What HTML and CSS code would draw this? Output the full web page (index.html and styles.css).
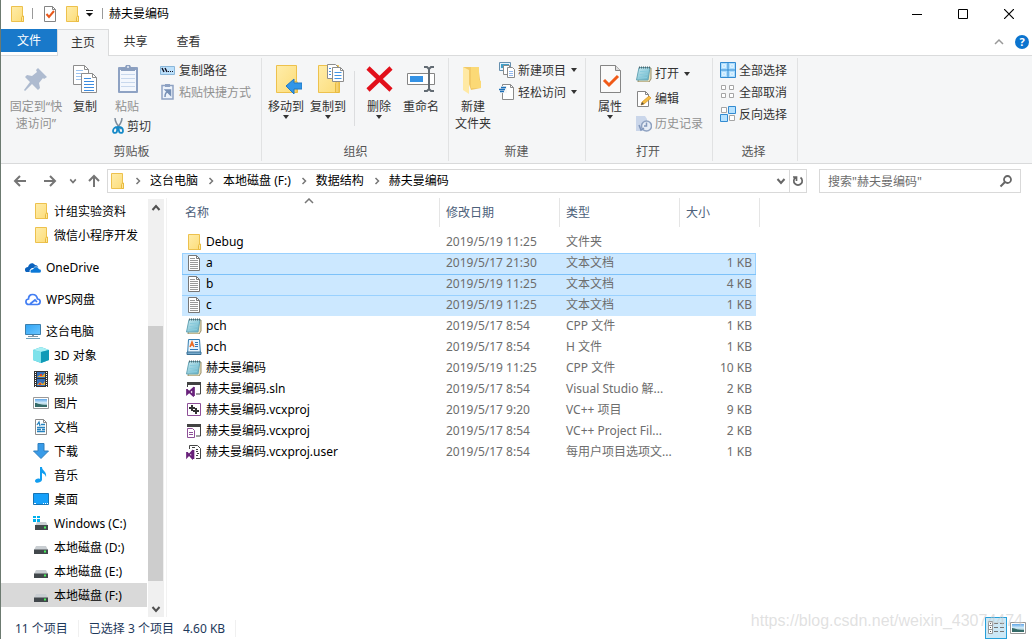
FILE: index.html
```html
<!DOCTYPE html>
<html lang="zh-CN">
<head>
<meta charset="utf-8">
<title>赫夫曼编码</title>
<link rel="stylesheet" href="styles.css">
</head>
<body>
<svg class="defs" aria-hidden="true">
  <defs>
    <linearGradient id="gf" x1="0" y1="0" x2="1" y2="1"><stop offset="0" stop-color="#ffedaa"/><stop offset="1" stop-color="#fcdc78"/></linearGradient>
    <linearGradient id="gb" x1="0" y1="0" x2="1" y2="1"><stop offset="0" stop-color="#2fa4f5"/><stop offset="1" stop-color="#6cc6ff"/></linearGradient>
    <linearGradient id="gn" x1="0" y1="0" x2="1" y2="1"><stop offset="0" stop-color="#c6eaf2"/><stop offset="1" stop-color="#62b2c6"/></linearGradient>
    <linearGradient id="gs" x1="0" y1="0" x2="0" y2="1"><stop offset="0" stop-color="#5fa6e8"/><stop offset=".5" stop-color="#d9f0fb"/><stop offset="1" stop-color="#376f73"/></linearGradient>
  </defs>
  <symbol id="folder" viewBox="-1 0 16 16"><path d="M1.500.5h11v10h1v5h-12z" fill="url(#gf)" stroke="#edc14d"/><path d="M11.500 15.500v-4l1-1.500h1v5.500z" fill="#ffe69a" stroke="#e8bb3f"/></symbol>
  <symbol id="doccheck" viewBox="0 0 16 16"><path d="M2.500.5h8l3 3v12h-11z" fill="#fff" stroke="#848484"/><path d="M10.500.5v3h3" fill="none" stroke="#848484"/><path d="M4.500 8l2.500 3 5-6" fill="none" stroke="#e8591c" stroke-width="2"/></symbol>
  <symbol id="down" viewBox="0 0 6 4"><path d="M0 0h6L3 4z" fill="currentColor"/></symbol>
  <symbol id="chev-r" viewBox="0 0 8 8"><path d="M2.500 1l3 3-3 3" fill="none" stroke="currentColor" stroke-width="1.500"/></symbol>
  <symbol id="chev-d" viewBox="0 0 10 10"><path d="M1.500 3l3.500 4 3.500-4" fill="none" stroke="currentColor" stroke-width="2"/></symbol>
  <symbol id="chev-u" viewBox="0 0 10 10"><path d="M1 7l4-4 4 4" fill="none" stroke="currentColor" stroke-width="1.500"/></symbol>
  <symbol id="arrow-l" viewBox="0 0 14 14"><path d="M13 7H2M7 2L2 7l5 5" fill="none" stroke="currentColor" stroke-width="2"/></symbol>
  <symbol id="arrow-r" viewBox="0 0 14 14"><path d="M1 7h11M7 2l5 5-5 5" fill="none" stroke="currentColor" stroke-width="2"/></symbol>
  <symbol id="arrow-u" viewBox="0 0 14 14"><path d="M7 13V2M2 7l5-5 5 5" fill="none" stroke="currentColor" stroke-width="2"/></symbol>
  <symbol id="pin" viewBox="0 0 32 32"><path d="M18 4l9 9-3 2-1-1-4 5 1 5-2 2-6-6-7 7-1-1 6-8-5-5 2-2 5 1 5-4-1-2z" fill="#aebbd0"/></symbol>
  <symbol id="copy" viewBox="0 0 32 32"><g fill="#fff" stroke="#8d8d8d"><path d="M4.500 1.500h11l4 4v15h-15z"/><path d="M15.500 1.500v4h4" fill="none"/></g><path d="M7 6.500h7M7 9.500h9M7 12.500h9M7 15.500h9" stroke="#9cc3f0"/><g fill="#fff" stroke="#8d8d8d"><path d="M12.500 9.500h11l4 4v15h-15z"/><path d="M23.500 9.500v4h4" fill="none"/></g><path d="M15 14.500h7M15 17.500h10M15 20.500h10M15 23.500h10M15 26.500h10" stroke="#3c8ce0"/></symbol>
  <symbol id="paste" viewBox="0 0 32 32"><rect x="7" y="3" width="20" height="26" rx="1" fill="#8ea2c3"/><path d="M9 6h16v21H9z" fill="#f3f7fd"/><path d="M10 10.500h14M10 14.500h14M10 18.500h14M10 22.500h14" stroke="#c8d8ed"/><path d="M10 7V4l4-1 1-2h4l1 2 4 1v3z" fill="#8b9fbf"/><circle cx="17" cy="3" r="1" fill="#e8eef8"/></symbol>
  <symbol id="cut" viewBox="0 0 12 16"><path d="M3 0c0 4 2 7 6 11M10 0c0 4-2 7-6 11" fill="none" stroke="#7f8d9c" stroke-width="1.500"/><path d="M5.500 9c-2 0-4.500 1-4.500 4 0 3 4 2 4 0zM6.500 9c2 0 4.500 1 4.500 4 0 3-4 2-4 0z" fill="none" stroke="#168ac8" stroke-width="1.800"/></symbol>
  <symbol id="path" viewBox="0 0 16 16"><path d="M.5 4.500h14v8H.5z" fill="#bce0fb" stroke="#8ab7da"/><path d="M2 6l2 4M5 6l2 4" stroke="#112" stroke-width="1.400"/><path d="M8 9.500h1M10 9.500h1M12 9.500h1" stroke="#112"/></symbol>
  <symbol id="pasteshort" viewBox="0 0 16 16"><path d="M2 1.500h11v13.500H2z" fill="#edf3fb" stroke="#8ea2c3" stroke-width="1.500"/><path d="M5 0h5v3H5z" fill="#8ea2c3"/><path d="M5 13c0-4 1-5 3-5M5.500 6h5v5z" fill="none" stroke="#7790b6" stroke-width="1.500"/><path d="M5.500 6h5v5z" fill="#7790b6"/></symbol>
  <symbol id="bigfolder" viewBox="0 0 32 32"><path d="M6.500 1.500h20v17h1v10h-21z" fill="url(#gf)" stroke="#edc14d"/><path d="M23.500 28.500v-9l1-2h2.500v11z" fill="#f5d170" stroke="#e8bb3f"/></symbol>
  <symbol id="moveto" viewBox="0 0 32 32"><use href="#bigfolder"/><path d="M16 22l8-7v4h8v6h-8v5z" fill="#3296e8" stroke="#2078c4"/></symbol>
  <symbol id="copyto" viewBox="0 0 32 32"><use href="#bigfolder"/><g fill="#fff" stroke="#8d8d8d"><path d="M15.500.5h8l3 3v11h-11z"/><path d="M20.500 3.500h8l3 3v11h-11z"/><path d="M28.500 3.500v3h3" fill="none"/></g><path d="M22.500 8.500h7M22.500 11.500h7M22.500 14.500h7M17 4.500h2M17 7.500h2M17 10.500h2" stroke="#4295e4"/></symbol>
  <symbol id="delete" viewBox="0 0 32 32"><path d="M5 4l23 22M28 4L5 26" stroke="#e2101b" stroke-width="4.500"/></symbol>
  <symbol id="rename" viewBox="0 0 32 32"><path d="M2.500 9.500h27v11h-27z" fill="#fff" stroke="#858585"/><path d="M5 12h13v6H5z" fill="#3492e5"/><path d="M19 3h3l2 2 2-2h3M24 4v22M19 27h3l2-2 2 2h3" fill="none" stroke="#626b73" stroke-width="2"/></symbol>
  <symbol id="newfolder" viewBox="0 0 32 32"><path d="M6 3h16v5l2 16-10 2z" fill="#f2ca68"/><path d="M14 3h8v13l2 1v7H14z" fill="#fbd976"/><path d="M6 3l6 3v24l-6-4z" fill="#ffe9a4"/></symbol>
  <symbol id="newitem" viewBox="0 0 16 16"><path d="M.5.5h11v8H.5z" fill="#e5f4ff" stroke="#668fae"/><path d="M2 2h8v4H2z" fill="#409fc8"/><path d="M4.500 3.500h6v9h-6z" fill="#fff" stroke="#8a8a8a"/><path d="M8.500 5.500h5l2 2v8h-7z" fill="#fff" stroke="#8a8a8a"/><path d="M10 9.500h4M10 11.500h4M10 13.500h4" stroke="#91b8ef"/></symbol>
  <symbol id="easy" viewBox="0 0 16 16"><path d="M3.500.5h8l3 3v12h-11z" fill="#fff" stroke="#8a8a8a"/><path d="M11.500.5v3h3" fill="none" stroke="#8a8a8a"/><path d="M1 2h7v7H0z" fill="#f5f6f7"/><path d="M2 3.500h5M0 5.500h6M1 7.500h4" stroke="#1e70b8" stroke-width="1.400"/></symbol>
  <symbol id="props" viewBox="0 0 32 32"><path d="M6.500 1.500h15l5 5v22h-20z" fill="#fafafa" stroke="#858585"/><path d="M21.500 1.500v5h5" fill="#ddd" stroke="#858585"/><path d="M10 16l5 5 9-9" fill="none" stroke="#f05a18" stroke-width="3"/></symbol>
  <symbol id="notepad" viewBox="0 0 16 16"><path d="M4 2h11v11l-2 3H2z" fill="#ece2bc" stroke="#998e69"/><path d="M3 1.500h11l-2 12.500H.5z" fill="url(#gn)" stroke="#67a5b5"/><path d="M3 1.500h11" stroke="#4c6870" stroke-width="2" stroke-dasharray="1 1"/><path d="M4 5.500h8M3.500 8.500h8M3 11.500h8" stroke="#8acbdc"/></symbol>
  <symbol id="edit" viewBox="0 0 16 16"><path d="M1.500.5h8l3 3v12h-11z" fill="#fff" stroke="#858585"/><path d="M9.500.5v3h3" fill="none" stroke="#858585"/><path d="M5 14l1-3 7-6 2 2-7 6z" fill="#f4bd43" stroke="#d59120" stroke-width=".7"/><path d="M5 14l1-3 2 2z" fill="#4c4c4c"/></symbol>
  <symbol id="history" viewBox="0 0 16 16"><path d="M0 0h9l2 3v12H0z" fill="#cad6ea"/><circle cx="10.500" cy="10" r="5" fill="#e7edf6" stroke="#8fa2c1" stroke-width="1.500"/><path d="M10.500 6.500V10H8M3 9l2 5 3-2" fill="none" stroke="#8197bb" stroke-width="1.500"/></symbol>
  <symbol id="selall" viewBox="0 0 16 16"><path d="M.5.5h15v15H.5zM8 0v16M0 8h16" fill="#acdcfd" stroke="#338bd1"/><path d="M2.500 2.500h3v3h-3zM10.500 2.500h3v3h-3zM2.500 10.500h3v3h-3zM10.500 10.500h3v3h-3z" fill="#c3e7ff" stroke="#dcf2ff"/></symbol>
  <symbol id="selnone" viewBox="0 0 16 16"><path d="M1.500 1.500h4v4h-4zM9.500 1.500h4v4h-4zM1.500 9.500h4v4h-4zM9.500 9.500h4v4h-4z" fill="#fff" stroke="#a5a5a5"/></symbol>
  <symbol id="selinv" viewBox="0 0 16 16"><path d="M1.500 1.500h5v5h-5zM9.500 9.500h5v5h-5z" fill="#fff" stroke="#a5a5a5"/><path d="M8.500.5h7v7h-7zM.5 8.500h7v7h-7z" fill="#b7e2ff" stroke="#338bd1"/></symbol>
  <symbol id="cloud" viewBox="0 0 16 16"><path d="M1 13c-2-2-1-5 2-5 1-4 5-5 7-2 2 0 3 1 3 3L7 9c-2 1-3 3-2 4z" fill="#0b62bd"/><path d="M6 14c-2-2 0-4 2-4 1-3 5-3 6 0 3 0 3 4 0 4z" fill="#0a78d7" stroke="#fff" stroke-width=".6"/></symbol>
  <symbol id="wps" viewBox="0 0 16 16"><path d="M4 13.500c-4 0-4-5-.5-5.500 0-6 8-6 9 0 4 .5 3 5.500 0 5.500zM5 13l5-4 2 2" fill="none" stroke="#427ef3" stroke-width="1.700"/></symbol>
  <symbol id="pc" viewBox="0 0 16 16"><path d="M.5 1.500h15v10H.5z" fill="url(#gb)" stroke="#3c7fad"/><path d="M7 12h2v1h4v1H3v-1h4z" fill="#8195a3"/><path d="M1 15.500h14" stroke="#6fa2bd"/></symbol>
  <symbol id="cube" viewBox="0 0 16 16"><path d="M0 3l8-3 8 3v10l-8 3-8-3z" fill="#31b9d1"/><path d="M0 3l8 2v11l-8-3z" fill="#7ee2eb"/><path d="M0 3l8-3 8 3-8 2z" fill="#a9f0f4"/><path d="M8 5l8-2v10l-8 3z" fill="#119ab7"/></symbol>
  <symbol id="film" viewBox="0 0 16 16"><path d="M1 0h14v16H1z" fill="#333"/><path d="M2.500 1v15M13.500 1v15" stroke="#fff" stroke-dasharray="1 1"/><path d="M4 1h8v6H4zM4 8h8v7H4z" fill="#356fba"/><path d="M4 6l3-2 2 1 3-3v4H4zM4 14l3-3 3 2 2-3v4H4z" fill="#e9ac34"/><path d="M7 3h2v2H7zM6 12h2v2H6z" fill="#da4430"/></symbol>
  <symbol id="picture" viewBox="0 0 16 16"><path d="M.5 2.500h15v11H.5z" fill="#fff" stroke="#999"/><path d="M2 4h12v8H2z" fill="url(#gs)"/><path d="M2 8c3 0 4 2 12 2v2H2z" fill="#356b69"/></symbol>
  <symbol id="docs" viewBox="0 0 16 16"><path d="M2.500.5h8l3 3v12h-11z" fill="#fff" stroke="#8b8b8b"/><path d="M10.500.5v3h3" fill="none" stroke="#8b8b8b"/><path d="M4 6l2-3 1 4M8 5.500h4M4 8.500h8M4 10.500h4M9 10.500h3M4 12.500h8" fill="none" stroke="#2682be" stroke-width="1.300"/></symbol>
  <symbol id="download" viewBox="0 0 16 16"><path d="M5 .5h6V8h4.500L8 15.500.5 8H5z" fill="#389be8" stroke="#2f7fbd"/></symbol>
  <symbol id="music" viewBox="0 0 16 16"><path d="M7 0h2c0 4 5 4 4 10-1-3-2-3-4-4v7c-1 3-7 4-7 1 0-2 3-3 5-2z" fill="#129ef0"/></symbol>
  <symbol id="desktop" viewBox="0 0 16 16"><path d="M.5 2.500h15v11H.5z" fill="#16a0fa" stroke="#1774b4"/><path d="M1 12.500h2M10 12.500h1M12 12.500h1M14 12.500h1" stroke="#fff"/></symbol>
  <symbol id="disk" viewBox="0 0 16 16"><path d="M3 7h10l2 4H1z" fill="#c9ced2"/><path d="M1 10.500h14V15H1z" fill="#42484c"/><path d="M11 12.500h2" stroke="#47f25b" stroke-width="2"/></symbol>
  <symbol id="windisk" viewBox="0 0 16 16"><path d="M4 7h9l2 4H2z" fill="#c9ced2"/><path d="M0 1h3v2H0zM4 1h3v2H4zM0 4h3v3H0zM4 4h3v3H4z" fill="#00b0ed"/><path d="M2 10h13v5H2z" fill="#42484c"/><path d="M11 12.500h2" stroke="#47f25b" stroke-width="2"/></symbol>
  <symbol id="text" viewBox="0 0 16 16"><path d="M2.500.5h8l3 3v12h-11z" fill="#fff" stroke="#777"/><path d="M10.500.5v3h3" fill="none" stroke="#777"/><path d="M4 3.500h5M4 5.500h8M4 7.500h8M4 9.500h8M4 11.500h8M4 13.500h8" stroke="#999"/></symbol>
  <symbol id="header" viewBox="0 0 16 16"><path d="M2.500.5h11l1 15h-13z" fill="#e7f5ff" stroke="#357daf"/><path d="M1 13h14v2.500H1z" fill="#76aacd" stroke="#386f94"/><path d="M4 8l2-5 2 5M5 6h2" fill="none" stroke="#ee6b22" stroke-width="1.500"/><path d="M9 3.500h3M9 5.500h3M9 7.500h3M4 10.500h8" stroke="#3578b5"/></symbol>
  <symbol id="sln" viewBox="0 0 16 16"><path d="M1 1h14v3H1z" fill="#424242"/><path d="M1.500 3v3M14.500 3v10H10" fill="none" stroke="#424242"/><path d="M1 8v5l6-5.500v7L1 9M8 6v9" fill="none" stroke="#68217a" stroke-width="1.700"/></symbol>
  <symbol id="vcx" viewBox="0 0 16 16"><path d="M1.500 1.500h13v12h-13z" fill="#fff" stroke="#8e4f98"/><path d="M6 3v6M3 6h6M10 6v6M7 9h6" stroke="#333" stroke-width="2"/></symbol>
  <symbol id="filter" viewBox="0 0 16 16"><path d="M1 1h14v3H1z" fill="#424242"/><path d="M14.500 3v10H10" fill="none" stroke="#424242"/><path d="M1.500 5.500h5l2 2v7h-7z" fill="#fff" stroke="#8e4f98"/><path d="M3 9.500h4M3 11.500h4" stroke="#8e4f98"/></symbol>
  <symbol id="user" viewBox="0 0 16 16"><path d="M3.500 5V1.500h8l3 3v10H10" fill="#fff" stroke="#444"/><path d="M6 3.500h3M10 5.500h2M10 7.500h2M11 9.500h2M10 11.500h2" stroke="#444"/><path d="M1 8v5l5-5.500v6.500L1 8.500M7.500 6v9" fill="none" stroke="#68217a" stroke-width="1.700"/></symbol>
</svg>

<header class="titlebar">
  <svg class="i16"><use href="#folder"/></svg><span class="tick"></span>
  <button class="quick" aria-label="属性"><svg class="i16"><use href="#doccheck"/></svg></button>
  <button class="quick" aria-label="新建文件夹"><svg class="i16"><use href="#folder"/></svg></button>
  <button class="quick more" aria-label="自定义快速访问工具栏"><svg viewBox="0 0 7 7"><path d="M0 .5h7" stroke="#222"/><path d="M0 3h7L3.500 6.500z" fill="#111"/></svg></button><span class="tick"></span>
  <h1>赫夫曼编码</h1>
  <div class="controls">
    <button aria-label="最小化"><svg viewBox="0 0 10 10"><path d="M0 5.500h10" stroke="#000"/></svg></button>
    <button aria-label="最大化"><svg viewBox="0 0 10 10"><path d="M.5.5h9v9h-9z" fill="none" stroke="#000"/></svg></button>
    <button aria-label="关闭"><svg viewBox="0 0 10 10"><path d="M0 0l10 10M10 0L0 10" stroke="#000" stroke-width="1.200"/></svg></button>
  </div>
</header>

<nav class="tabs">
  <button class="file">文件</button><button class="active">主页</button><button>共享</button><button>查看</button>
  <div class="help"><button aria-label="折叠功能区"><svg class="i10"><use href="#chev-u"/></svg></button><button class="q" aria-label="帮助">?</button></div>
</nav>

<section class="ribbon">
  <div class="group clipboard">
    <div class="tools">
      <button class="big pinbtn" disabled><svg><use href="#pin"/></svg><span>固定到“快<br>速访问”</span></button>
      <button class="big copybtn"><svg><use href="#copy"/></svg><span>复制</span></button>
      <div class="pastecol"><button class="big" disabled><svg><use href="#paste"/></svg><span>粘贴</span></button><button class="small"><svg class="scissors"><use href="#cut"/></svg>剪切</button></div>
      <div class="stack"><button class="small"><svg class="i16"><use href="#path"/></svg>复制路径</button><button class="small" disabled><svg class="i16"><use href="#pasteshort"/></svg>粘贴快捷方式</button></div>
    </div>
    <h2>剪贴板</h2>
  </div>
  <div class="group organize">
    <div class="tools">
      <button class="big"><svg><use href="#moveto"/></svg><span>移动到</span><svg class="caret"><use href="#down"/></svg></button>
      <button class="big"><svg><use href="#copyto"/></svg><span>复制到</span><svg class="caret"><use href="#down"/></svg></button>
      <span class="rule"></span>
      <button class="big"><svg><use href="#delete"/></svg><span>删除</span><svg class="caret"><use href="#down"/></svg></button>
      <button class="big"><svg><use href="#rename"/></svg><span>重命名</span></button>
    </div>
    <h2>组织</h2>
  </div>
  <div class="group new">
    <div class="tools">
      <button class="big"><svg><use href="#newfolder"/></svg><span>新建<br>文件夹</span></button>
      <div class="stack"><button class="small"><svg class="i16"><use href="#newitem"/></svg>新建项目<svg class="caret"><use href="#down"/></svg></button><button class="small"><svg class="i16"><use href="#easy"/></svg>轻松访问<svg class="caret"><use href="#down"/></svg></button></div>
    </div>
    <h2>新建</h2>
  </div>
  <div class="group open">
    <div class="tools">
      <button class="big"><svg><use href="#props"/></svg><span>属性</span><svg class="caret"><use href="#down"/></svg></button>
      <div class="stack loose"><button class="small"><svg class="i16"><use href="#notepad"/></svg>打开<svg class="caret"><use href="#down"/></svg></button><button class="small"><svg class="i16"><use href="#edit"/></svg>编辑</button><button class="small" disabled><svg class="i16"><use href="#history"/></svg>历史记录</button></div>
    </div>
    <h2>打开</h2>
  </div>
  <div class="group select">
    <div class="tools"><div class="stack"><button class="small"><svg class="i16"><use href="#selall"/></svg>全部选择</button><button class="small"><svg class="i16"><use href="#selnone"/></svg>全部取消</button><button class="small"><svg class="i16"><use href="#selinv"/></svg>反向选择</button></div></div>
    <h2>选择</h2>
  </div>
</section>

<section class="navbar">
  <button class="nav wide" aria-label="后退"><svg class="i14"><use href="#arrow-l"/></svg></button>
  <button class="nav wide" aria-label="前进"><svg class="i14"><use href="#arrow-r"/></svg></button>
  <button class="nav recent" aria-label="最近位置"><svg class="i8"><use href="#chev-d"/></svg></button>
  <button class="nav up" aria-label="上移"><svg class="i14"><use href="#arrow-u"/></svg></button>
  <div class="address">
    <svg class="i16"><use href="#folder"/></svg><svg class="sep"><use href="#chev-r"/></svg>
    <a href="#pc-root">这台电脑</a><svg class="sep"><use href="#chev-r"/></svg>
    <a href="#disk-f">本地磁盘 (F:)</a><svg class="sep"><use href="#chev-r"/></svg>
    <a href="#data">数据结构</a><svg class="sep"><use href="#chev-r"/></svg>
    <a href="#here">赫夫曼编码</a>
    <button class="history" aria-label="以前的位置"><svg class="i10"><use href="#chev-d"/></svg></button>
    <button class="refresh" aria-label="刷新"><svg class="i14" viewBox="0 0 14 14"><path d="M9.500 3.500a4.200 4.200 0 1 1-5 0M5.500 7V3H2" fill="none" stroke="#666" stroke-width="1.700"/></svg></button>
  </div>
  <label class="search"><input type="text" placeholder='搜索"赫夫曼编码"' aria-label="搜索"><svg class="i14" viewBox="0 0 14 14"><circle cx="8.500" cy="5.500" r="3.500" fill="none" stroke="#666" stroke-width="1.800"/><path d="M6 8l-4.500 4.500" stroke="#666" stroke-width="2"/></svg></label>
</section>

<main class="content">
  <aside class="sidebar">
    <ul class="tree">
      <li class="child"><a href="#q1"><svg class="i16"><use href="#folder"/></svg>计组实验资料</a></li>
      <li class="child"><a href="#q2"><svg class="i16"><use href="#folder"/></svg>微信小程序开发</a></li>
      <li class="root"><a href="#od"><svg class="i16"><use href="#cloud"/></svg>OneDrive</a></li>
      <li class="root"><a href="#wp"><svg class="i16"><use href="#wps"/></svg>WPS网盘</a></li>
      <li class="root"><a href="#pc-root"><svg class="i16"><use href="#pc"/></svg>这台电脑</a></li>
      <li class="child"><a href="#d3"><svg class="i16"><use href="#cube"/></svg>3D 对象</a></li>
      <li class="child"><a href="#video"><svg class="i16"><use href="#film"/></svg>视频</a></li>
      <li class="child"><a href="#pics"><svg class="i16"><use href="#picture"/></svg>图片</a></li>
      <li class="child"><a href="#documents"><svg class="i16"><use href="#docs"/></svg>文档</a></li>
      <li class="child"><a href="#downloads"><svg class="i16"><use href="#download"/></svg>下载</a></li>
      <li class="child"><a href="#songs"><svg class="i16"><use href="#music"/></svg>音乐</a></li>
      <li class="child"><a href="#desk"><svg class="i16"><use href="#desktop"/></svg>桌面</a></li>
      <li class="child"><a href="#disk-c"><svg class="i16"><use href="#windisk"/></svg>Windows (C:)</a></li>
      <li class="child"><a href="#disk-d"><svg class="i16"><use href="#disk"/></svg>本地磁盘 (D:)</a></li>
      <li class="child"><a href="#disk-e"><svg class="i16"><use href="#disk"/></svg>本地磁盘 (E:)</a></li>
      <li class="child current"><a href="#disk-f"><svg class="i16"><use href="#disk"/></svg>本地磁盘 (F:)</a></li>
    </ul>
    <div class="scrollbar"><button aria-label="向上滚动"><svg class="i10 flip"><use href="#chev-d"/></svg></button><div class="track"><div class="thumb"></div></div><button aria-label="向下滚动"><svg class="i10"><use href="#chev-d"/></svg></button></div>
  </aside>
  <div class="files">
    <table>
      <colgroup><col class="c-name"><col class="c-date"><col class="c-type"><col class="c-size"><col class="c-end"></colgroup>
      <thead><tr><th><button>名称<svg class="sort i10"><use href="#chev-u"/></svg></button></th><th><button>修改日期</button></th><th><button>类型</button></th><th colspan="2"><button>大小</button></th></tr></thead>
      <tbody>
        <tr><td><span><svg class="i16"><use href="#folder"/></svg>Debug</span></td><td>2019/5/19 11:25</td><td>文件夹</td><td></td></tr>
        <tr class="selected focus"><td><span><svg class="i16"><use href="#text"/></svg>a</span></td><td>2019/5/17 21:30</td><td>文本文档</td><td>1 KB</td></tr>
        <tr class="selected"><td><span><svg class="i16"><use href="#text"/></svg>b</span></td><td>2019/5/19 11:25</td><td>文本文档</td><td>4 KB</td></tr>
        <tr class="selected"><td><span><svg class="i16"><use href="#text"/></svg>c</span></td><td>2019/5/19 11:25</td><td>文本文档</td><td>1 KB</td></tr>
        <tr><td><span><svg class="i16"><use href="#notepad"/></svg>pch</span></td><td>2019/5/17 8:54</td><td>CPP 文件</td><td>1 KB</td></tr>
        <tr><td><span><svg class="i16"><use href="#header"/></svg>pch</span></td><td>2019/5/17 8:54</td><td>H 文件</td><td>1 KB</td></tr>
        <tr><td><span><svg class="i16"><use href="#notepad"/></svg>赫夫曼编码</span></td><td>2019/5/19 11:25</td><td>CPP 文件</td><td>10 KB</td></tr>
        <tr><td><span><svg class="i16"><use href="#sln"/></svg>赫夫曼编码.sln</span></td><td>2019/5/17 8:54</td><td>Visual Studio 解...</td><td>2 KB</td></tr>
        <tr><td><span><svg class="i16"><use href="#vcx"/></svg>赫夫曼编码.vcxproj</span></td><td>2019/5/17 9:20</td><td>VC++ 项目</td><td>9 KB</td></tr>
        <tr><td><span><svg class="i16"><use href="#filter"/></svg>赫夫曼编码.vcxproj</span></td><td>2019/5/17 8:54</td><td>VC++ Project Fil...</td><td>2 KB</td></tr>
        <tr><td><span><svg class="i16"><use href="#user"/></svg>赫夫曼编码.vcxproj.user</span></td><td>2019/5/17 8:54</td><td>每用户项目选项文...</td><td>1 KB</td></tr>
      </tbody>
    </table>
  </div>
</main>

<footer class="status">
  <span class="count">11 个项目</span><span class="chosen">已选择 3 个项目</span><span class="size">4.60 KB</span>
  <div class="views">
    <button class="on" aria-label="详细信息"><svg viewBox="0 0 16 16"><path d="M.5 1.500h4v12h-4zM.5 5.500h4M.5 9.500h4" fill="#fff" stroke="#999"/><path d="M2 3.500h1M2 7.500h1M2 11.500h1" stroke="#555"/><path d="M6 3.500h4M12 3.500h4M6 7.500h4M12 7.500h4M6 11.500h4M12 11.500h4" stroke="#777"/></svg></button>
    <button aria-label="大缩略图"><svg class="i16"><use href="#picture"/></svg></button>
  </div>
  <span class="watermark">https://blog.csdn.net/weixin_43074474</span>
</footer>
</body>
</html>
```
FILE: styles.css
```css
* { box-sizing: border-box; }

body {
  margin: 0;
  height: 100vh;
  display: flex;
  flex-direction: column;
  overflow: hidden;
  border-left: 1px solid #6c7a70;
  background: #fff;
  color: #000;
  font: 12px/17px "Noto Sans", "Noto Sans CJK SC", sans-serif;
}

button {
  display: flex;
  align-items: center;
  justify-content: center;
  margin: 0;
  padding: 0;
  border: 0;
  background: none;
  color: inherit;
  font: inherit;
  white-space: nowrap;
}
a { color: inherit; text-decoration: none; white-space: nowrap; }
svg { display: block; flex: none; }
.defs { position: absolute; width: 0; height: 0; }
.i16 { width: 16px; height: 16px; }
.i14 { width: 14px; height: 14px; }
.i10 { width: 10px; height: 10px; }
.i8 { width: 8px; height: 8px; }
.flip { transform: rotate(180deg); }

/* Title bar */
.titlebar { display: flex; align-items: center; flex: none; height: 29px; padding: 0 0 2px 8px; }
.tick { width: 1px; height: 11px; margin: 0 6px 0 7px; background: #9a9a9a; }
.quick { width: 22px; }
.quick.more { width: 12px; }
.quick.more svg { width: 7px; height: 7px; }
.titlebar h1 { margin: 0; font-size: 12px; font-weight: 400; }
.controls { display: flex; margin-left: auto; }
.controls button { width: 46px; height: 27px; }
.controls svg { width: 10px; height: 10px; }

/* Tabs */
.tabs { display: flex; flex: none; height: 27px; border-bottom: 1px solid #dadbdc; color: #333; }
.tabs > button { width: 53px; height: 26px; padding-bottom: 2px; }
.tabs > .file { width: 56px; height: 23px; padding: 0; background: #1979ca; color: #fff; }
.tabs > .active { width: 52px; height: 27px; border: 1px solid #dadbdc; border-bottom: 0; background: #f5f6f7; }
.help { display: flex; align-items: center; gap: 11px; margin-left: auto; padding-right: 3px; color: #999; }
.help .q { width: 14px; height: 14px; border-radius: 50%; background: #0b74cf; color: #fff; font-size: 11px; font-weight: 700; line-height: 14px; }

/* Ribbon */
.ribbon { display: flex; flex: none; height: 108px; border-bottom: 1px solid #d9dadb; background: #f5f6f7; color: #333; }
.group { position: relative; display: flex; flex-direction: column; padding-right: 10px; }
.group::after { content: ""; position: absolute; right: 0; top: 2px; bottom: 2px; width: 1px; background: #e1e2e3; }
.group h2 { margin: 0 -8px 0 0; color: #555; font-size: 12px; font-weight: 400; text-align: center; }
.tools { display: flex; align-items: flex-start; height: 87px; }
.big { flex-direction: column; justify-content: flex-start; padding-top: 8px; }
.big > svg { width: 32px; height: 32px; margin-bottom: 2px; }
.big > .caret { width: 6px; height: 4px; margin: 0; }
.big span { text-align: center; }
.small { justify-content: flex-start; gap: 3px; height: 22px; }
.small .caret { width: 6px; height: 4px; margin-left: 2px; }
.stack { padding-top: 3px; }
.loose { padding-top: 5px; }
.loose .small { height: 25px; }
button:disabled { color: #919191; }
.scissors { width: 12px; height: 16px; }
.clipboard { padding-left: 3px; padding-right: 11px; }
.pinbtn { width: 64px; }
.copybtn { width: 34px; }
.pastecol { width: 50px; margin-right: 8px; }
.pastecol .big { width: 50px; }
.pastecol .small { padding-left: 10px; }
.organize { padding-left: 3px; padding-right: 7px; }
.organize h2 { margin: 0 -4px 0 0; }
.organize .big { width: 42px; }
.rule { width: 1px; height: 55px; margin: 15px 3px 0 5px; background: #dcdddf; }
.new { padding-left: 2px; padding-right: 9px; }
.new .big, .open .big { width: 44px; }
.new .stack, .open .stack { margin-left: 4px; }
.open { padding-left: 2px; }
.open h2, .new h2 { margin: 0 -5px 0 0; }
.select { padding-left: 7px; padding-right: 11px; }
.select h2 { margin: 0; }

/* Navigation and address */
.navbar { display: flex; align-items: center; flex: none; gap: 2px; height: 34px; padding: 0 11px 0 5px; }
.nav { height: 24px; color: #757575; }
.nav.wide { width: 28px; }
.nav.recent { width: 14px; }
.nav.up { width: 23px; }
.address { display: flex; align-items: center; flex: 1; height: 24px; border: 1px solid #d9d9d9; padding-left: 1px; }
.address a { margin-bottom: 2px; }
.sep { width: 8px; height: 8px; margin: 0 8px 0 9px; color: #777; }
.history { width: 16px; height: 22px; margin-left: auto; color: #666; }
.refresh { width: 17px; height: 22px; border-left: 1px solid #d9d9d9; }
.search { display: flex; align-items: center; width: 202px; height: 24px; margin-left: 10px; padding: 0 7px 0 8px; border: 1px solid #d9d9d9; }
.search input { flex: 1; min-width: 0; padding: 0; border: 0; outline: 0; background: none; font: inherit; }
.search input::placeholder { color: #6d6d6d; opacity: 1; }

/* Folder tree */
.content { display: flex; flex: 1; min-height: 0; }
.sidebar { display: flex; flex: none; width: 166px; padding: 1px 2px 0 0; border-right: 1px solid #f2f2f2; }
.tree { flex: 1; margin: 0; padding: 0; overflow: hidden; list-style: none; }
.tree a { display: flex; align-items: center; gap: 5px; height: 24px; }
.child { padding-left: 32px; }
.root { margin-top: 8px; padding-left: 24px; }
.current { margin-right: 1px; background: #d9d9d9; }
.scrollbar { display: flex; flex-direction: column; width: 16px; background: #f0f0f0; color: #505050; }
.scrollbar button { width: 16px; height: 17px; }
.track { display: flex; flex: 1; flex-direction: column; justify-content: flex-end; padding-bottom: 19px; }
.thumb { width: 15px; height: 70%; background: #cdcdcd; }

/* File list */
.files { flex: 1; min-width: 0; padding-left: 15px; overflow: hidden; }
table { width: 578px; border-collapse: separate; border-spacing: 0; table-layout: fixed; color: #6d6d6d; }
.c-name { width: 258px; }
.c-date, .c-type { width: 120px; }
.c-size { width: 76px; }
.c-end { width: 4px; }
th { padding: 0 0 5px; font-weight: 400; }
th button { position: relative; justify-content: flex-start; width: 100%; height: 29px; padding-left: 6px; border-right: 1px solid #e5e5e5; color: #4c607a; }
th:first-child button { padding-left: 3px; }
.sort { position: absolute; top: -2px; left: 122px; color: #777; }
td { height: 21px; padding: 0 6px 2px; white-space: nowrap; line-height: 18px; border-top: 1px solid transparent; }
td:first-child { padding-left: 4px; color: #000; }
td:first-child span { display: flex; align-items: center; gap: 4px; }
td:nth-child(4) { padding-right: 4px; text-align: right; }
.selected td { border-top-color: #99d1ff; background: #cce8ff; }
.focus td:first-child { box-shadow: inset 1px 0 #99d1ff; }
.focus td:nth-child(4) { box-shadow: inset -1px 0 #99d1ff; }
.focus + .selected td { border-top-color: #7cc1f9; }

/* Status bar */
.status { position: relative; display: flex; align-items: center; flex: none; height: 22px; padding: 0 3px 0 14px; color: #1e395b; }
.count { padding-right: 10px; border-right: 1px solid #f0f0f0; }
.chosen { padding: 0 9px 0 10px; }
.size { padding-right: 10px; border-right: 1px solid #f0f0f0; }
.views { display: flex; align-self: stretch; margin-left: auto; }
.views button { width: 22px; }
.views .on { border: 1px solid #26a0da; background: #cce8f6; }
.views svg { width: 16px; height: 16px; }
.watermark { position: absolute; right: 9px; bottom: 9px; color: rgba(200, 200, 200, 0.55); font: 16px/18px "Liberation Sans", sans-serif; }
```
